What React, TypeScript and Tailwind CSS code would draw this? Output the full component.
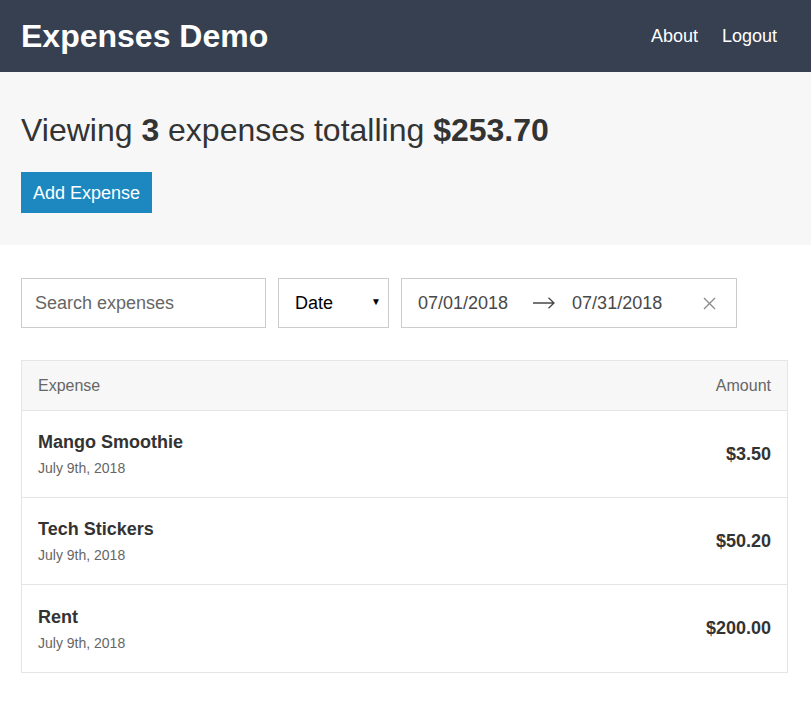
import React from 'react';

const expenses = [
  { id: 1, description: 'Mango Smoothie', createdAt: 'July 9th, 2018', amount: '$3.50' },
  { id: 2, description: 'Tech Stickers', createdAt: 'July 9th, 2018', amount: '$50.20' },
  { id: 3, description: 'Rent', createdAt: 'July 9th, 2018', amount: '$200.00' }
];

export default function App() {
  return (
    <div className="min-h-screen bg-white text-[#333333] font-['Liberation_Sans',Arial,sans-serif]">
      {/* Header */}
      <header className="bg-[#364051] h-[72px]">
        <div className="pl-[21px] pr-[34px] h-full flex items-center justify-between">
          <h1 className="text-[32px] font-bold text-white leading-none">Expenses Demo</h1>
          <nav className="flex items-center gap-[24px] text-[18px] text-white">
            <a href="#">About</a>
            <a href="#">Logout</a>
          </nav>
        </div>
      </header>

      {/* Summary */}
      <div className="bg-[#f7f7f7] h-[173px] pl-[21px] pr-[23px] pt-[39px]">
        <h2 className="text-[32px] font-light leading-[1.2]">
          Viewing <span className="font-bold">3</span> expenses totalling{' '}
          <span className="font-bold">$253.70</span>
        </h2>
        <button className="mt-[23px] h-[41px] px-[12px] bg-[#1c88bf] text-white text-[18px] leading-none">
          Add Expense
        </button>
      </div>

      <div className="pl-[21px] pr-[23px]">
        {/* Filters */}
        <div className="flex gap-[12px] mt-[33px]">
          <input
            className="w-[245px] h-[50px] border border-[#cacccd] px-[13px] text-[18px] text-[#333] placeholder:text-[#666] outline-none bg-white"
            placeholder="Search expenses"
          />
          <div className="relative w-[111px] h-[50px] border border-[#cacccd] flex items-center pl-[16px] text-[18px] text-black bg-white">
            Date
            <span className="absolute right-[7px] top-[15px] text-[10px]">▼</span>
          </div>
          <div className="w-[336px] h-[50px] border border-[#cacccd] flex items-center pl-[16px] text-[18px] text-[#484848] bg-white">
            <span>07/01/2018</span>
            <svg className="ml-[25px] mr-[17px]" width="22" height="12" viewBox="0 0 22 12" fill="none" stroke="#484848" strokeWidth="1.3">
              <path d="M0 6h21M15.5 0.8L21 6l-5.5 5.2" />
            </svg>
            <span>07/31/2018</span>
            <svg className="ml-[41px]" width="13" height="13" viewBox="0 0 13 13" fill="none" stroke="#8a8a8a" strokeWidth="1.3">
              <path d="M1 1l11 11M12 1L1 12" />
            </svg>
          </div>
        </div>

        {/* Table */}
        <div className="mt-[32px] border border-[#e5e5e5]">
          <div className="h-[50px] bg-[#f7f7f7] border-b border-[#e5e5e5] flex items-center justify-between px-[16px] text-[16px] text-[#666]">
            <span>Expense</span>
            <span>Amount</span>
          </div>
          {expenses.map((expense, index) => (
            <div
              key={expense.id}
              className={`h-[87px] flex items-center justify-between px-[16px] ${index < expenses.length - 1 ? 'border-b border-[#e5e5e5]' : ''}`}
            >
              <div className="flex flex-col">
                <h3 className="text-[18px] font-bold leading-none text-[#333]">{expense.description}</h3>
                <span className="mt-[10px] text-[14px] leading-none text-[#666]">{expense.createdAt}</span>
              </div>
              <h3 className="text-[18px] font-bold text-[#333]">{expense.amount}</h3>
            </div>
          ))}
        </div>
      </div>
    </div>
  );
}
